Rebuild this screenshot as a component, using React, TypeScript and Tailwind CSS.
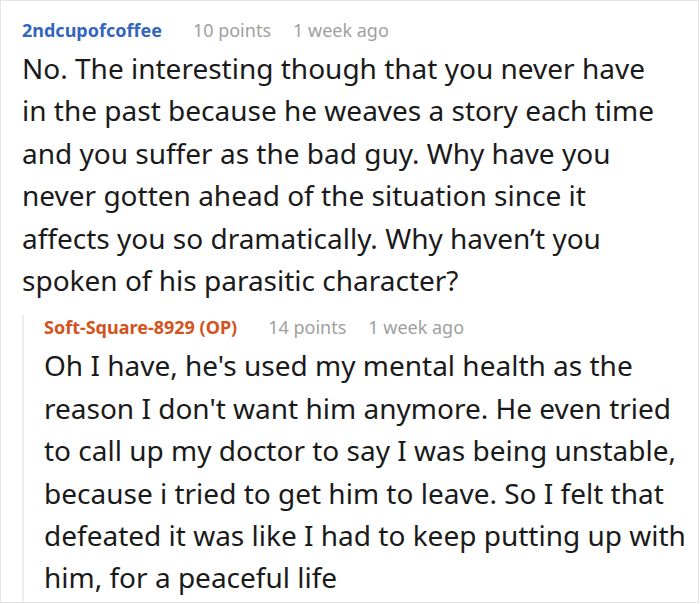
const parent = [
  'No. The interesting though that you never have',
  'in the past because he weaves a story each time',
  'and you suffer as the bad guy. Why have you',
  'never gotten ahead of the situation since it',
  'affects you so dramatically. Why haven\u2019t you',
  'spoken of his parasitic character?',
];

const reply = [
  'Oh I have, he\'s used my mental health as the',
  'reason I don\'t want him anymore. He even tried',
  'to call up my doctor to say I was being unstable,',
  'because i tried to get him to leave. So I felt that',
  'defeated it was like I had to keep putting up with',
  'him, for a peaceful life',
];

function Meta({ name, points, color }: { name: string; points: string; color: string }) {
  return (
    <div className="flex items-center text-[18px] leading-[24px]">
      <span className={`font-bold ${color}`}>{name}</span>
      <span className="text-[#a0a0a0] ml-[31px]">{points}</span>
      <span className="text-[#a0a0a0] ml-[22px]">1 week ago</span>
    </div>
  );
}

export default function App() {
  return (
    <div className="w-[700px] h-[604px] bg-white" style={{ fontFamily: '"Noto Sans", "Open Sans", sans-serif' }}>
      <div className="w-[699px] h-[603px] border border-[#e4e4e4] pl-[21px] pt-[17px] overflow-hidden">
        <Meta name="2ndcupofcoffee" points="10 points" color="text-[#3366bb]" />
        <div className="mt-[5px] text-[28px] leading-[42.4px] text-[#1a1a1a]">
          {parent.map((l) => (
            <div key={l} className="whitespace-nowrap">{l}</div>
          ))}
        </div>
        <div className="mt-[14px] border-l-2 border-[#ececec] pl-[20px] pb-[4px]">
          <Meta name="Soft-Square-8929 (OP)" points="14 points" color="text-[#d4521c]" />
          <div className="mt-[5px] text-[28px] leading-[42.4px] text-[#1a1a1a]">
            {reply.map((l) => (
              <div key={l} className="whitespace-nowrap">{l}</div>
            ))}
          </div>
        </div>
      </div>
    </div>
  );
}
